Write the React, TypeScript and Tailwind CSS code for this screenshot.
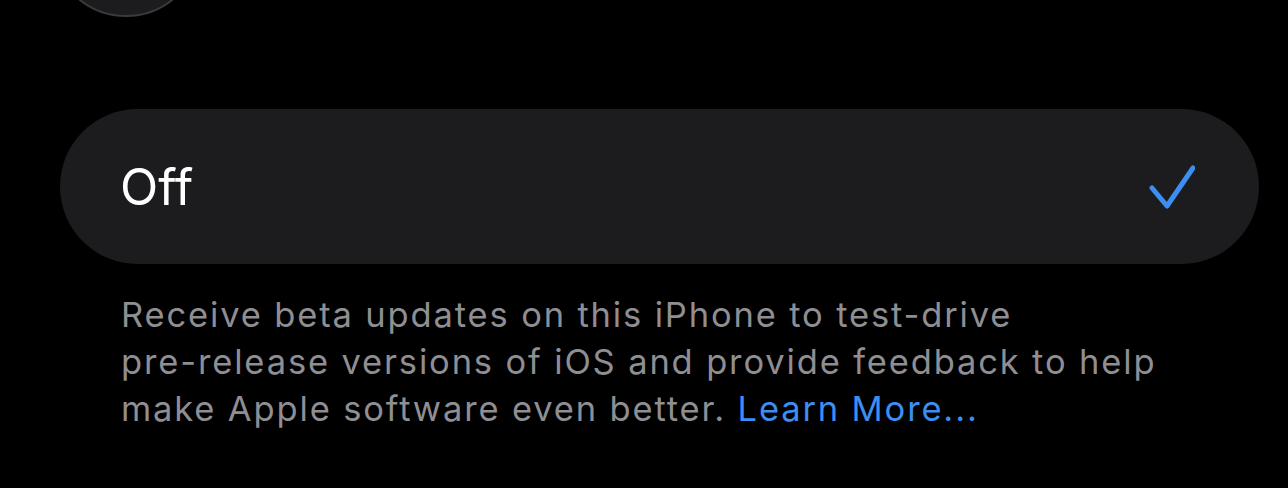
export default function App() {
  return (
    <div className="h-[488px] w-[1288px] overflow-hidden bg-black font-['Inter','Liberation_Sans',sans-serif]">
      {/* avatar cut off by the top edge */}
      <div className="ml-[51px] mt-[-133px] h-[150px] w-[150px] rounded-full border-2 border-[#3a3a3c] bg-[#1c1c1e]" />

      <div className="ml-[60px] mr-[29px] mt-[92px] flex h-[155px] items-center justify-between rounded-full bg-[#1c1c1e] pl-[60px] pr-[64px]">
        <span className="text-[50px] leading-none tracking-[0px] text-white">Off</span>
        <svg width="46" height="44" viewBox="0 0 46 44" fill="none">
          <polyline
            points="3,23 18,41 44,3"
            stroke="#3d8ef2"
            strokeWidth="5"
            strokeLinecap="round"
            strokeLinejoin="round"
          />
        </svg>
      </div>

      <p className="ml-[121px] mt-[27px] w-[1160px] text-[34.5px] leading-[47px] tracking-[1.85px] text-[#8e8e93]">
        Receive beta updates on this iPhone to test-drive
        <br />
        pre-release versions of iOS and provide feedback to help
        <br />
        make Apple software even better.{" "}
        <span className="text-[#3d8ef2]">Learn More...</span>
      </p>
    </div>
  );
}
